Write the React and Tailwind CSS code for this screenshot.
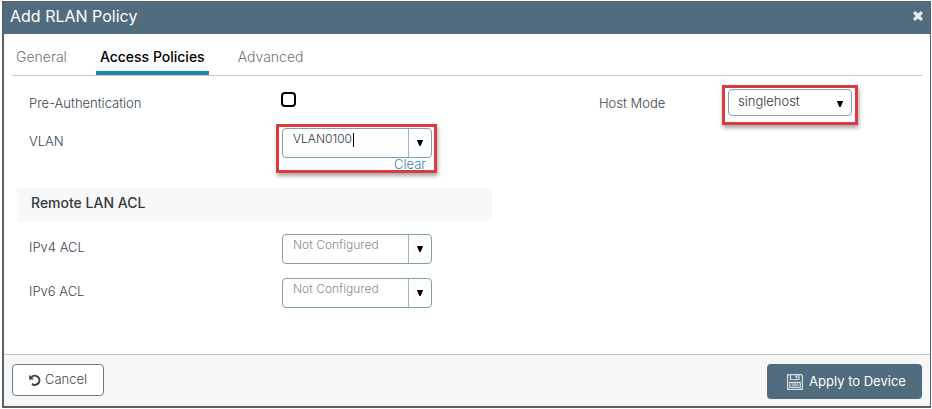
import React, { useState } from 'react'
import { FaTimes } from 'react-icons/fa'

const TABS = ['General', 'Access Policies', 'Advanced']

const Caret = () => (
  <svg viewBox="0 0 8 8" className="w-2 h-2" fill="#000" aria-hidden="true">
    <path d="M0.8 1h6.4L4.6 7H3.4z" />
  </svg>
)

const UndoIcon = () => (
  <svg viewBox="0 0 12 12" className="w-3 h-3" fill="none" aria-hidden="true">
    <path d="M2.6 3A4.6 4.6 0 1 1 3 9.9" stroke="#2f3f4b" strokeWidth="2" />
    <path d="M.2.8v4.7h4.7z" fill="#2f3f4b" />
  </svg>
)

const SaveIcon = () => (
  <svg viewBox="0 0 16 16" className="w-4 h-4" fill="none" stroke="#d3dee5" aria-hidden="true">
    <path d="M.6.6h13.6l1.2 1.2v13.6H.6z" strokeWidth="1.2" />
    <path d="M3.5.6v4.9h8.5V.6" strokeWidth="1.2" />
    <path d="M9.5 1.2v3" strokeWidth="1.8" />
    <path d="M2.8 8.3h10.4v5.2H2.8z" strokeWidth="1.2" />
    <path d="M4.5 10h7M4.5 11.8h7" strokeWidth="1" />
  </svg>
)

// Red frame with a soft shadow that marks the important fields
const Highlight = ({ children, className }) => (
  <div className={`border-3 border-[#dd3a3f] shadow-[1px_3px_4px_rgba(0,0,0,0.35)] ${className}`}>
    {children}
  </div>
)

const ComboBox = ({ id, value, onChange, placeholder, active }) => (
  <div className="relative flex w-[150px] h-[30px] rounded border border-[#7f9eac] bg-white overflow-hidden">
    <input
      id={id}
      type="text"
      value={value}
      onChange={(e) => onChange(e.target.value)}
      placeholder={placeholder}
      className="flex-1 min-w-0 pl-[10px] pb-2 text-xs font-light text-[#30363b] placeholder:text-[#8a8a8a] outline-none"
    />
    {active && <span className="absolute left-[70px] top-1 w-px h-[14px] bg-black" />}
    <button type="button" aria-label="Show options" className="w-[23px] flex items-center justify-center border-l border-[#9fb3bd]">
      <Caret />
    </button>
  </div>
)

const App = () => {
  const [tab, setTab] = useState('Access Policies')
  const [preAuth, setPreAuth] = useState(false)
  const [vlan, setVlan] = useState('VLAN0100')
  const [ipv4, setIpv4] = useState('')
  const [ipv6, setIpv6] = useState('')

  return (
    <div className="bg-white pt-px pl-[2px] pr-px font-['Inter',sans-serif]">
      <div className="border border-l-2 border-b-2 border-[#56616a]">
        {/* Title bar */}
        <header className="h-8 pb-1 flex items-center justify-between bg-[#526c7f] pl-[6px] pr-[6px] text-white">
          <h1 className="text-base leading-5">Add RLAN Policy</h1>
          <button type="button" aria-label="Close" className="text-[#e9eef1]">
            <FaTimes className="w-3 h-3" stroke="currentColor" strokeWidth="50" />
          </button>
        </header>

        {/* Tabs */}
        <nav className="mx-2 h-[42px] flex items-end gap-[25px] border-b border-[#c9c9c9]">
          {TABS.map((name) => (
            <button
              key={name}
              type="button"
              onClick={() => setTab(name)}
              className={`h-7 px-1 pb-1 text-sm leading-5 border-b-4 ${
                name === tab
                  ? 'font-medium text-black border-[#1d84b5]'
                  : 'font-light text-[#70757a] border-transparent'
              }`}
            >
              {name}
            </button>
          ))}
        </nav>

        <main className="h-[278px] grid grid-cols-[475px_1fr] pl-[13px] pr-2 text-[13px] leading-5 font-light text-[#3a4852]">
          <section>
            <div className="h-12 pt-4 pl-3 flex">
              <label htmlFor="pre-auth" className="w-[252px] pt-px">Pre-Authentication</label>
              <input
                id="pre-auth"
                type="checkbox"
                checked={preAuth}
                onChange={(e) => setPreAuth(e.target.checked)}
                className="appearance-none w-[15px] h-[15px] rounded border-2 border-black bg-white checked:bg-[#1d84b5]"
              />
            </div>
            <div className="h-16 pl-3 flex">
              <label htmlFor="vlan" className="w-[247px] pt-[7px]">VLAN</label>
              <Highlight className="w-[161px] h-[49px] pl-[3px] pt-px">
                <ComboBox id="vlan" value={vlan} onChange={setVlan} active={vlan === 'VLAN0100'} />
                <button
                  type="button"
                  onClick={() => setVlan('')}
                  className="block ml-auto mr-2 text-[13px] leading-3 text-[#2f83bb]"
                >
                  Clear
                </button>
              </Highlight>
            </div>
            <h2 className="h-[33px] px-[14px] pb-1 flex items-center bg-[#f8f8f8] text-sm font-medium text-[#34393d]">
              Remote LAN ACL
            </h2>
            <div className="pt-[13px] pl-3 flex flex-col gap-[14px]">
              <div className="flex">
                <label htmlFor="ipv4" className="w-[253px] pt-[3px]">IPv4 ACL</label>
                <ComboBox id="ipv4" value={ipv4} onChange={setIpv4} placeholder="Not Configured" />
              </div>
              <div className="flex">
                <label htmlFor="ipv6" className="w-[253px] pt-[3px]">IPv6 ACL</label>
                <ComboBox id="ipv6" value={ipv6} onChange={setIpv6} placeholder="Not Configured" />
              </div>
            </div>
          </section>

          <section className="pt-[9px] pr-16 flex justify-end items-start">
            <label htmlFor="host-mode" className="w-[123px] pt-2">Host Mode</label>
            <Highlight className="w-[136px] h-10 px-[3px] pt-px">
              <div className="relative">
                <select
                  id="host-mode"
                  defaultValue="singlehost"
                  className="appearance-none w-full h-[27px] pl-[9px] pb-1 rounded border border-[#7fa3bb] bg-white text-[13px] font-light text-[#30363b]"
                >
                  <option>singlehost</option>
                  <option>multihost</option>
                  <option>multidomain</option>
                  <option>multiauth</option>
                </select>
                <span className="absolute right-2 bottom-2 pointer-events-none">
                  <Caret />
                </span>
              </div>
            </Highlight>
          </section>
        </main>

        <footer className="h-[52px] pt-[9px] px-2 flex items-start justify-between border-t border-[#c4c4c4] bg-[#f6f6f6]">
          <button
            type="button"
            className="w-[92px] h-8 pb-px flex items-center justify-center gap-1 rounded border border-[#66798a] bg-white text-[13px] font-light text-[#3c464e]"
          >
            <UndoIcon />
            Cancel
          </button>
          <button
            type="button"
            className="w-[155px] h-[35px] pl-1 flex items-center justify-center gap-[6px] rounded bg-[#526c7f] text-[13px] text-white"
          >
            <SaveIcon />
            Apply to Device
          </button>
        </footer>
      </div>
    </div>
  )
}

export default App
